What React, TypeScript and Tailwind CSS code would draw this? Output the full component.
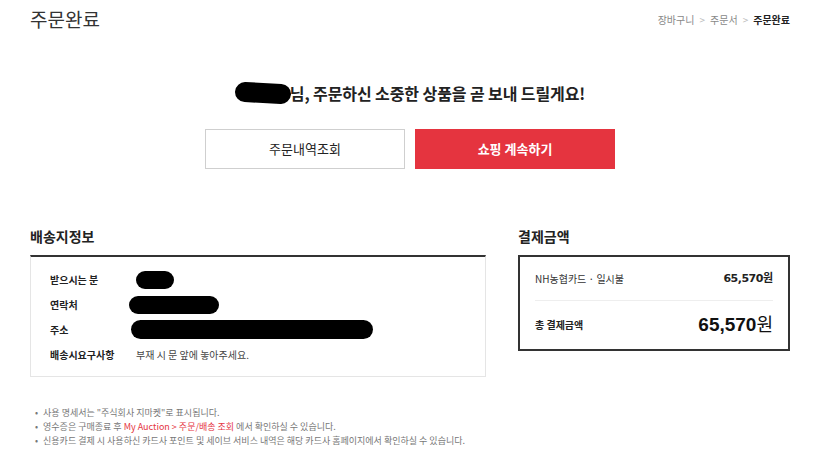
const kr = "font-['Noto_Sans_CJK_KR','Noto_Sans',sans-serif]";

function Blob({ className }: { className: string }) {
  return <span className={`inline-block rounded-full bg-black ${className}`} />;
}

const rows = [
  { label: '받으시는 분', blob: 'w-[38px] h-[18px] ml-0' },
  { label: '연락처', blob: 'w-[90px] h-[18px] -ml-[7px]' },
  { label: '주소', blob: 'w-[242px] h-[19px] -ml-[5px]' },
];

export default function App() {
  return (
    <div className={`w-[835px] h-[470px] bg-white text-[#333] ${kr}`}>
      <div className="w-[760px] ml-[30px]">
        <header className="flex items-center justify-between h-[36px]">
          <h1 className="text-[19px] leading-none text-[#333]">주문완료</h1>
          <nav className="flex items-center gap-[5px] text-[10px] text-[#888] pt-[2px]">
            <span>장바구니</span>
            <span className="text-[#bbb]">&gt;</span>
            <span>주문서</span>
            <span className="text-[#bbb]">&gt;</span>
            <span className="font-bold text-[#222]">주문완료</span>
          </nav>
        </header>

        <div className="flex items-center justify-center mt-[46px] h-[22px]">
          <Blob className="w-[56px] h-[20px] -mr-[1px] rotate-[3deg]" />
          <h2 className="text-[16px] font-bold text-[#222] leading-none tracking-[-0.1px]">
            님, 주문하신 소중한 상품을 곧 보내 드릴게요!
          </h2>
        </div>

        <div className="flex justify-center gap-[10px] mt-[25px]">
          <button className="w-[200px] h-[40px] border border-[#cfcfcf] bg-white text-[13px] text-[#222]">
            주문내역조회
          </button>
          <button className="w-[200px] h-[40px] bg-[#e5343f] text-[13px] font-bold text-white">
            쇼핑 계속하기
          </button>
        </div>

        <div className="flex gap-[32px] mt-[60px]">
          <section className="w-[456px]">
            <h3 className="text-[14px] font-bold text-[#222] leading-none h-[26px]">배송지정보</h3>
            <div className="border-t-2 border-[#333] border-x border-b border-x-[#e5e5e5] border-b-[#e5e5e5] h-[122px] pl-[19px] pt-[10px]">
              {rows.map((r) => (
                <div key={r.label} className="flex items-center h-[25px]">
                  <span className="w-[86px] text-[10px] font-bold text-[#222]">{r.label}</span>
                  <Blob className={r.blob} />
                </div>
              ))}
              <div className="flex items-center h-[25px]">
                <span className="w-[86px] text-[10px] font-bold text-[#222]">배송시요구사항</span>
                <span className="text-[10px] text-[#444]">부재 시 문 앞에 놓아주세요.</span>
              </div>
            </div>
          </section>

          <section className="w-[272px]">
            <h3 className="text-[14px] font-bold text-[#222] leading-none h-[26px]">결제금액</h3>
            <div className="border-2 border-[#333] h-[96px] px-[15px]">
              <div className="flex items-center justify-between h-[44px] border-b border-[#eee]">
                <span className="text-[10px] text-[#333]">NH농협카드 · 일시불</span>
                <span className="text-[11px] font-bold text-[#222]">
                  <span className="font-['DejaVu_Sans',sans-serif] tracking-[-0.5px]">65,570</span>원
                </span>
              </div>
              <div className="flex items-center justify-between h-[46px]">
                <span className="text-[10px] font-bold text-[#222]">총 결제금액</span>
                <span className="text-[18px] text-[#111] leading-none">
                  <span className="font-['Liberation_Sans',sans-serif] font-bold text-[19px]">65,570</span>원
                </span>
              </div>
            </div>
          </section>
        </div>

        <ul className="mt-[29px] pl-[5px] text-[9px] text-[#777] leading-[14px]">
          <li className="flex gap-[5px]"><span>•</span><span>사용 명세서는 "주식회사 지마켓"로 표시됩니다.</span></li>
          <li className="flex gap-[5px]">
            <span>•</span>
            <span>
              영수증은 구매종료 후 <span className="text-[#e5343f]">My Auction &gt; 주문/배송 조회</span> 에서 확인하실 수 있습니다.
            </span>
          </li>
          <li className="flex gap-[5px]"><span>•</span><span>신용카드 결제 시 사용하신 카드사 포인트 및 세이브 서비스 내역은 해당 카드사 홈페이지에서 확인하실 수 있습니다.</span></li>
        </ul>
      </div>
    </div>
  );
}
